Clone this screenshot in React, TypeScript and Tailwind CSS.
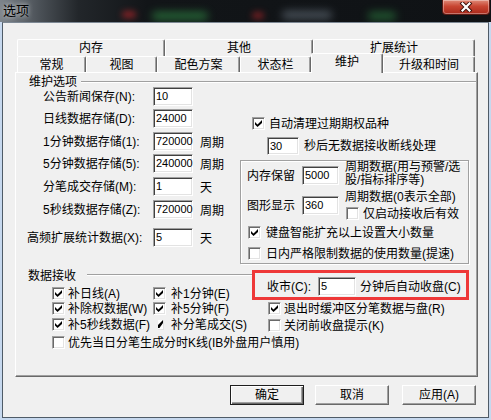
import React from 'react';

type CheckProps = {
  checked?: boolean;
};

const CheckBox: React.FC<CheckProps> = ({ checked }) => (
  <span className="box-border flex h-[13px] w-[13px] shrink-0 items-center justify-center border border-t-[#a0a0a0] border-l-[#a0a0a0] border-r-white border-b-white bg-white shadow-[inset_1px_1px_0_#696969,inset_-1px_-1px_0_#e3e3e3]">
    {checked && (
      <svg width="7" height="7" viewBox="0 0 7 7">
        <polygon points="0,2 2.5,4.5 7,0 7,3 2.5,7 0,4.5" fill="#000" />
      </svg>
    )}
  </span>
);

type FieldProps = {
  value: string;
  className: string;
};

const Field: React.FC<FieldProps> = ({ value, className }) => (
  <div
    className={`box-border shrink-0 border border-t-[#a0a0a0] border-l-[#a0a0a0] border-r-white border-b-white bg-white pl-[2px] font-['Liberation_Sans',sans-serif] text-[11px] leading-[15px] shadow-[inset_1px_1px_0_#404040,inset_-1px_-1px_0_#e3e3e3] ${className}`}
  >
    <span className="block pt-px">{value}</span>
  </div>
);

type TabProps = {
  label: string;
  className: string;
  active?: boolean;
};

const Tab: React.FC<TabProps> = ({ label, className, active }) => (
  <div
    className={`box-border flex shrink-0 items-center justify-center rounded-t-[2px] border-t border-l border-r border-t-white border-l-white border-r-[#696969] bg-[#f0f0f0] shadow-[inset_-1px_0_0_#a0a0a0] leading-[12px] ${
      active ? 'h-[20px] pb-[3px]' : 'mt-[3px] h-[16px]'
    } ${className}`}
  >
    {label}
  </div>
);

type ButtonProps = {
  label: string;
  className?: string;
  primary?: boolean;
};

const Button: React.FC<ButtonProps> = ({ label, className, primary }) => (
  <div
    className={`box-border flex h-[20px] w-[74px] items-center justify-center bg-[#f0f0f0] leading-[12px] ${
      primary
        ? 'border border-[#1e1e1e] shadow-[inset_1px_1px_0_#fff,inset_-1px_-1px_0_#696969,inset_-2px_-2px_0_#a0a0a0]'
        : 'border border-t-white border-l-white border-r-[#696969] border-b-[#696969] shadow-[inset_-1px_-1px_0_#a0a0a0]'
    } ${className ?? ''}`}
  >
    {label}
  </div>
);

const leftRows = [
  { label: '公告新闻保存(N):', value: '10', unit: '', mt: '-mt-px', pl: 'pl-[27px]' },
  { label: '日线数据存储(D):', value: '24000', unit: '', mt: 'mt-[3px]', pl: 'pl-[27px]' },
  { label: '1分钟数据存储(1):', value: '720000', unit: '周期', mt: 'mt-[4px]', pl: 'pl-[27px]' },
  { label: '5分钟数据存储(5):', value: '240000', unit: '周期', mt: 'mt-[3px]', pl: 'pl-[27px]' },
  { label: '分笔成交存储(M):', value: '1', unit: '天', mt: 'mt-[4px]', pl: 'pl-[27px]' },
  { label: '5秒线数据存储(Z):', value: '720000', unit: '周期', mt: 'mt-[4px]', pl: 'pl-[27px]' },
  { label: '高频扩展统计数据(X):', value: '5', unit: '天', mt: 'mt-[9px]', pl: 'pl-[11px]' },
];

const App: React.FC = () => {
  return (
    <div className="flex h-[420px] w-[491px] flex-col overflow-hidden bg-[#c6d8ee] font-['Liberation_Sans','Noto_Sans_CJK_SC',sans-serif] text-[12px] text-black">
      {/* title bar */}
      <div className="relative flex h-[22px] shrink-0 items-start justify-between overflow-hidden bg-[linear-gradient(90deg,#7d848b_0%,#4b5157_8%,#22262a_16%,#121518_30%,#0f1215_100%)]">
        <span className="absolute left-[122px] top-[11px] h-[7px] w-[14px] rounded-full bg-[#b3262a] opacity-70 blur-[3px]" />
        <span className="absolute left-[152px] top-[12px] h-[8px] w-[56px] rounded-full bg-[#2f8a44] opacity-70 blur-[4px]" />
        <span className="absolute left-[252px] top-[12px] h-[7px] w-[12px] rounded-full bg-[#b3262a] opacity-60 blur-[3px]" />
        <span className="absolute left-[282px] top-[11px] h-[8px] w-[50px] rounded-full bg-[#9fb0c0] opacity-40 blur-[4px]" />
        <span className="absolute left-[368px] top-[12px] h-[8px] w-[28px] rounded-full bg-[#2f8a44] opacity-60 blur-[4px]" />
        <span className="relative ml-[3px] mt-[3px] text-[13px] leading-[15px] [text-shadow:0_0_5px_rgba(255,255,255,0.9)]">
          选项
        </span>
        <div className="relative mr-px flex h-[15px] w-[48px] items-center justify-center rounded-b-[4px] border border-t-0 border-[#5a1a14] bg-[linear-gradient(#df8a78,#c84532_45%,#a8291b)] shadow-[inset_0_0_0_1px_rgba(255,255,255,0.35)]">
          <svg width="14" height="10" viewBox="0 0 14 10">
            <path d="M3.5 1.5l7 7M10.5 1.5l-7 7" stroke="#3a0f0a" strokeWidth="4" strokeLinecap="square" />
            <path d="M3.5 1.5l7 7M10.5 1.5l-7 7" stroke="#fff" strokeWidth="2.2" strokeLinecap="square" />
          </svg>
        </div>
      </div>

      {/* client area */}
      <div className="ml-[2px] box-border flex h-[396px] w-[487px] flex-col border border-[#4f5b67] border-t-[#7d8894] bg-[#f0f0f0]">
        <div className="ml-[12px] mt-[16px] w-[463px]">
          {/* tab rows */}
          <div className="flex h-[17px] pl-[2px]">
            <Tab label="内存" className="h-[17px] w-[148px] !mt-0" />
            <Tab label="其他" className="h-[17px] w-[148px] !mt-0" />
            <Tab label="扩展统计" className="h-[17px] w-[162px] !mt-0" />
          </div>
          <div className="relative z-10 -mt-[3px] flex h-[20px] items-start pl-[2px]">
            <Tab label="常规" className="w-[69px]" />
            <Tab label="视图" className="w-[71px]" />
            <Tab label="配色方案" className="w-[83px]" />
            <Tab label="状态栏" className="w-[71px]" />
            <Tab label="维护" className="w-[72px]" active />
            <Tab label="升级和时间" className="w-[92px]" />
          </div>

          {/* tab panel */}
          <div className="box-border -mt-px flex h-[305px] flex-col border border-t-white border-l-white border-r-[#696969] border-b-[#696969] shadow-[inset_-1px_-1px_0_#a0a0a0]">
            <div className="mt-[3px] flex h-[12px] items-center">
              <span className="pl-[13px] leading-[12px]">维护选项</span>
              <div className="ml-[4px] mr-px box-border h-[2px] flex-1 border-y border-t-[#a0a0a0] border-b-white" />
            </div>

            <div className="flex">
              <div className="w-[224px] shrink-0">
                {leftRows.map((row) => (
                  <div key={row.label} className={`flex h-[19px] items-center ${row.mt}`}>
                    <span className={`w-[137px] shrink-0 whitespace-nowrap ${row.pl}`}>{row.label}</span>
                    <Field value={row.value} className="h-[19px] w-[40px]" />
                    {row.unit && <span className="ml-[7px] mt-[3px]">{row.unit}</span>}
                  </div>
                ))}
              </div>

              <div className="flex-1">
                <div className="mt-[29px] flex h-[13px] items-center gap-[4px] pl-[12px]">
                  <CheckBox checked />
                  <span>自动清理过期期权品种</span>
                </div>
                <div className="mt-[7px] flex h-[18px] items-center pl-[27px]">
                  <Field value="30" className="h-[18px] w-[32px]" />
                  <span className="ml-[5px]">秒后无数据接收断线处理</span>
                </div>

                <div className="mt-[5px] box-border h-[104px] w-[229px] border border-[#a0a0a0] shadow-[inset_1px_1px_0_#fff,1px_1px_0_#fff]">
                  <div className="mt-px flex items-start">
                    <div className="mt-[4px] flex h-[19px] items-center pl-[6px]">
                      <span className="w-[55px] shrink-0">内存保留</span>
                      <Field value="5000" className="h-[19px] w-[37px]" />
                    </div>
                    <div className="-mt-px ml-[6px] flex flex-col whitespace-nowrap leading-[13px]">
                      <span>周期数据(用与预警/选</span>
                      <span>股/指标排序等)</span>
                    </div>
                  </div>
                  <div className="mt-[4px] flex items-start">
                    <div className="mt-[5px] flex h-[19px] items-center pl-[6px]">
                      <span className="w-[55px] shrink-0">图形显示</span>
                      <Field value="360" className="h-[19px] w-[37px]" />
                    </div>
                    <div className="ml-[6px] flex flex-col">
                      <span className="whitespace-nowrap leading-[12px]">周期数据(0表示全部)</span>
                      <div className="ml-px mt-[4px] flex h-[13px] items-center gap-[4px]">
                        <CheckBox />
                        <span className="whitespace-nowrap">仅启动接收后有效</span>
                      </div>
                    </div>
                  </div>
                  <div className="mt-[6px] flex h-[13px] items-center gap-[5px] pl-[7px]">
                    <CheckBox checked />
                    <span className="whitespace-nowrap">键盘智能扩充以上设置大小数量</span>
                  </div>
                  <div className="mt-[8px] flex h-[13px] items-center gap-[5px] pl-[7px]">
                    <CheckBox />
                    <span className="whitespace-nowrap">日内严格限制数据的使用数量(提速)</span>
                  </div>
                </div>
              </div>
            </div>

            {/* data receive */}
            <div className="mt-[5px] flex">
              <div className="w-[236px] shrink-0">
                <div className="flex h-[14px] items-center">
                  <span className="pl-[12px] leading-[14px]">数据接收</span>
                  <div className="mb-[2px] ml-[11px] box-border h-[2px] flex-1 border-y border-t-[#a0a0a0] border-b-white" />
                </div>
                <div className="mt-[4px] flex h-[13px] items-center">
                  <div className="flex w-[137px] shrink-0 items-center gap-[3px] pl-[36px]">
                    <CheckBox checked />
                    <span className="whitespace-nowrap">补日线(A)</span>
                  </div>
                  <div className="flex items-center gap-[5px]">
                    <CheckBox checked />
                    <span className="whitespace-nowrap">补1分钟(E)</span>
                  </div>
                </div>
                <div className="mt-[2px] flex h-[13px] items-center">
                  <div className="flex w-[137px] shrink-0 items-center gap-[3px] pl-[36px]">
                    <CheckBox checked />
                    <span className="whitespace-nowrap">补除权数据(W)</span>
                  </div>
                  <div className="flex items-center gap-[5px]">
                    <CheckBox checked />
                    <span className="whitespace-nowrap">补5分钟(F)</span>
                  </div>
                </div>
                <div className="mt-[3px] flex h-[13px] items-center">
                  <div className="flex w-[137px] shrink-0 items-center gap-[3px] pl-[36px]">
                    <CheckBox checked />
                    <span className="whitespace-nowrap">补5秒线数据(F)</span>
                  </div>
                  <div className="flex items-center">
                    <span className="ml-[5px] box-border flex h-[10px] w-[6px] items-center justify-end border-r border-b border-r-[#e3e3e3] border-b-[#e3e3e3] bg-white">
                      <svg width="5" height="8" viewBox="0 0 5 8">
                        <polygon points="0,5 5,0 5,3 1.5,8 0,8" fill="#000" />
                      </svg>
                    </span>
                    <span className="ml-[7px] whitespace-nowrap">补分笔成交(S)</span>
                  </div>
                </div>
                <div className="mt-[5px] flex h-[13px] items-center gap-[3px] pl-[36px]">
                  <CheckBox />
                  <span className="whitespace-nowrap">优先当日分笔生成分时K线(IB外盘用户慎用)</span>
                </div>
              </div>

              <div className="flex-1">
                <div className="mt-px box-border flex h-[30px] w-[217px] items-center border-[3px] border-[#ee3838] pl-[12px] pt-[3px]">
                  <span className="w-[51px] shrink-0 whitespace-nowrap">收市(C):</span>
                  <Field value="5" className="h-[19px] w-[38px]" />
                  <span className="ml-[4px] whitespace-nowrap">分钟后自动收盘(C)</span>
                </div>
                <div className="mt-[2px] flex h-[13px] items-center gap-[3px] pl-[16px]">
                  <CheckBox checked />
                  <span className="whitespace-nowrap">退出时缓冲区分笔数据与盘(R)</span>
                </div>
                <div className="mt-[4px] flex h-[13px] items-center gap-[3px] pl-[16px]">
                  <CheckBox />
                  <span className="whitespace-nowrap">关闭前收盘提示(K)</span>
                </div>
              </div>
            </div>
          </div>
        </div>

        {/* buttons */}
        <div className="ml-[227px] mt-[8px] flex">
          <Button label="确定" primary />
          <Button label="取消" className="ml-[11px]" />
          <Button label="应用(A)" className="ml-[13px]" />
        </div>
      </div>
    </div>
  );
};

export default App;
